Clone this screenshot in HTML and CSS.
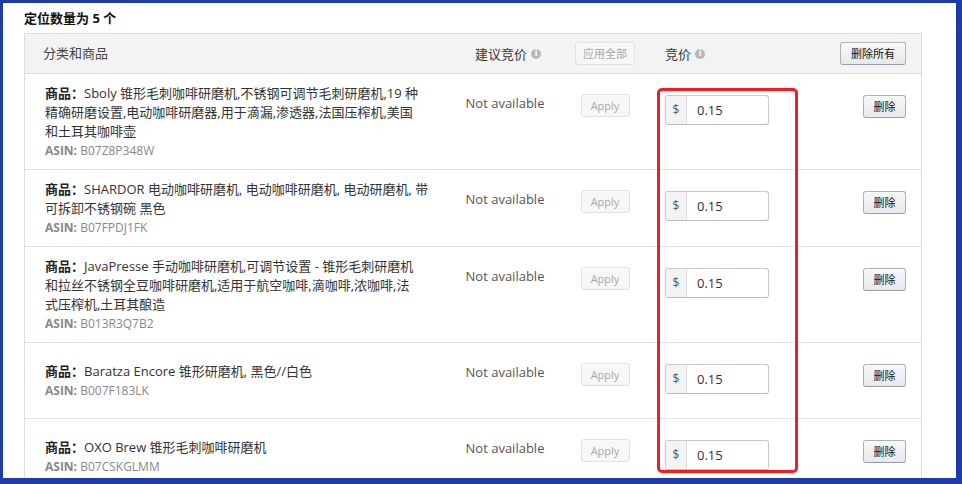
FILE: index.html
```html
<!DOCTYPE html>
<html lang="zh">
<head>
<meta charset="utf-8">
<link rel="stylesheet" href="styles.css">
</head>
<body>
<div class="frame">
  <div class="title">定位数量为 5 个</div>
  <div class="table">
    <div class="row head">
      <div class="c-prod">分类和商品</div>
      <div class="c-sugg">建议竞价 <span class="info">i</span></div>
      <div class="c-apply"><button class="btn disabled">应用全部</button></div>
      <div class="c-bid">竞价 <span class="info">i</span></div>
      <div class="c-del"><button class="btn">删除所有</button></div>
    </div>

    <div class="row">
      <div class="c-prod"><b>商品：</b>Sboly 锥形毛刺咖啡研磨机,不锈钢可调节毛刺研磨机,19 种<br>精确研磨设置,电动咖啡研磨器,用于滴漏,渗透器,法国压榨机,美国<br>和土耳其咖啡壶<div class="asin"><b>ASIN:</b> B07Z8P348W</div></div>
      <div class="c-sugg na">Not available</div>
      <div class="c-apply"><button class="btn disabled small">Apply</button></div>
      <div class="c-bid"><div class="money"><span class="cur">$</span><span class="val">0.15</span></div></div>
      <div class="c-del"><button class="btn">删除</button></div>
    </div>

    <div class="row">
      <div class="c-prod"><b>商品：</b>SHARDOR 电动咖啡研磨机, 电动咖啡研磨机, 电动研磨机, 带<br>可拆卸不锈钢碗 黑色<div class="asin"><b>ASIN:</b> B07FPDJ1FK</div></div>
      <div class="c-sugg na">Not available</div>
      <div class="c-apply"><button class="btn disabled small">Apply</button></div>
      <div class="c-bid"><div class="money"><span class="cur">$</span><span class="val">0.15</span></div></div>
      <div class="c-del"><button class="btn">删除</button></div>
    </div>

    <div class="row">
      <div class="c-prod"><b>商品：</b>JavaPresse 手动咖啡研磨机,可调节设置 - 锥形毛刺研磨机<br>和拉丝不锈钢全豆咖啡研磨机,适用于航空咖啡,滴咖啡,浓咖啡,法<br>式压榨机,土耳其酿造<div class="asin"><b>ASIN:</b> B013R3Q7B2</div></div>
      <div class="c-sugg na">Not available</div>
      <div class="c-apply"><button class="btn disabled small">Apply</button></div>
      <div class="c-bid"><div class="money"><span class="cur">$</span><span class="val">0.15</span></div></div>
      <div class="c-del"><button class="btn">删除</button></div>
    </div>

    <div class="row">
      <div class="c-prod"><b>商品：</b>Baratza Encore 锥形研磨机, 黑色//白色<div class="asin"><b>ASIN:</b> B007F183LK</div></div>
      <div class="c-sugg na">Not available</div>
      <div class="c-apply"><button class="btn disabled small">Apply</button></div>
      <div class="c-bid"><div class="money"><span class="cur">$</span><span class="val">0.15</span></div></div>
      <div class="c-del"><button class="btn">删除</button></div>
    </div>

    <div class="row">
      <div class="c-prod"><b>商品：</b>OXO Brew 锥形毛刺咖啡研磨机<div class="asin"><b>ASIN:</b> B07CSKGLMM</div></div>
      <div class="c-sugg na">Not available</div>
      <div class="c-apply"><button class="btn disabled small">Apply</button></div>
      <div class="c-bid"><div class="money"><span class="cur">$</span><span class="val">0.15</span></div></div>
      <div class="c-del"><button class="btn">删除</button></div>
    </div>
  </div>
  <div class="highlight"></div>
</div>
</body>
</html>
```

FILE: styles.css
```css
html, body {
  margin: 0;
  padding: 0;
  background: #ffffff;
}
body {
  font-family: "Open Sans", "Noto Sans CJK SC", sans-serif;
  font-size: 13px;
  color: #333;
}
.frame {
  position: relative;
  box-sizing: border-box;
  width: 962px;
  height: 484px;
  overflow: hidden;
  border-style: solid;
  border-color: #1d3ca8;
  border-width: 3px 6px 6px 3px;
  padding: 6px 0 0 21px;
  background: #fff;
}
.title {
  font-weight: bold;
  font-size: 13px;
  line-height: 18px;
  color: #111;
}
.table {
  margin-top: 6px;
  width: 898px;
  box-sizing: border-box;
  border: 1px solid #dddddd;
}
.row {
  display: grid;
  grid-template-columns: 430px 100px 100px 175px 1fr;
  align-items: start;
  min-height: 75px;
  border-bottom: 1px solid #e3e3e3;
}
.row > div {
  padding-top: 21px;
  box-sizing: border-box;
}
.row > .c-prod {
  align-self: center;
  padding: 10px 0 9px 20px;
  line-height: 19px;
  color: #333;
}
.c-prod b {
  color: #222;
}
.asin {
  font-size: 12px;
  color: #888;
  line-height: 19px;
}
.asin b {
  color: #888;
}
.c-sugg {
  text-align: center;
}
.na {
  line-height: 17px;
  color: #555;
}
.c-apply {
  text-align: center;
}
.c-bid {
  padding-left: 10px;
}
.c-del {
  justify-self: end;
  padding-right: 15px;
}
.row.head {
  min-height: 39px;
  background: #f3f3f3;
  align-items: center;
  border-bottom: 1px solid #dddddd;
}
.row.head > div {
  padding-top: 0;
}
.row.head > .c-prod {
  padding: 0 0 0 18px;
  color: #444;
  align-self: center;
}
.row.head .c-sugg,
.row.head .c-bid {
  color: #333;
  display: flex;
  align-items: center;
  gap: 4px;
}
.row.head .c-sugg {
  justify-content: center;
  padding-left: 6px;
}
.info {
  display: inline-block;
  width: 10px;
  height: 10px;
  border-radius: 50%;
  background: #b8b8b8;
  color: #fff;
  font-size: 8px;
  line-height: 10px;
  text-align: center;
  font-weight: bold;
  font-family: "DejaVu Sans", sans-serif;
}
.btn {
  font-family: "Noto Sans CJK SC", "Open Sans", sans-serif;
  font-size: 11px;
  height: 23px;
  padding: 0 9px;
  border: 1px solid #adb1b8;
  border-bottom-color: #999ca2;
  border-radius: 3px;
  background: linear-gradient(#f7f8fa, #e7e9ec);
  color: #111;
  line-height: 21px;
  margin: 0;
  box-shadow: 0 1px 0 rgba(255,255,255,0.6) inset;
}
.btn.disabled {
  color: #a8a8a8;
  background: #f7f7f7;
  border-color: #e0e0e0;
}
.btn.small {
  width: 49px;
  padding: 0;
  font-family: "Open Sans", sans-serif;
  margin-top: -1px;
}
.row.head .c-apply .btn {
  width: 60px;
  padding: 0;
  margin-top: -1px;
}
.row.head .c-del .btn {
  width: 66px;
  padding: 0;
}
.c-del .btn {
  min-width: 43px;
}
.money {
  display: flex;
  width: 104px;
  height: 30px;
  box-sizing: border-box;
  border: 1px solid #c9c9c9;
  border-bottom-color: #bdbdbd;
  border-radius: 3px;
  overflow: hidden;
  background: #fff;
}
.cur {
  width: 20px;
  background: #f3f3f3;
  border-right: 1px solid #dcdcdc;
  color: #555;
  text-align: center;
  line-height: 28px;
  font-size: 12px;
}
.val {
  padding-left: 10px;
  line-height: 28px;
  color: #333;
}
.highlight {
  position: absolute;
  left: 654px;
  top: 85px;
  width: 141px;
  height: 385px;
  box-sizing: border-box;
  border: 3px solid #ee1f1f;
  border-radius: 5px;
}
```
